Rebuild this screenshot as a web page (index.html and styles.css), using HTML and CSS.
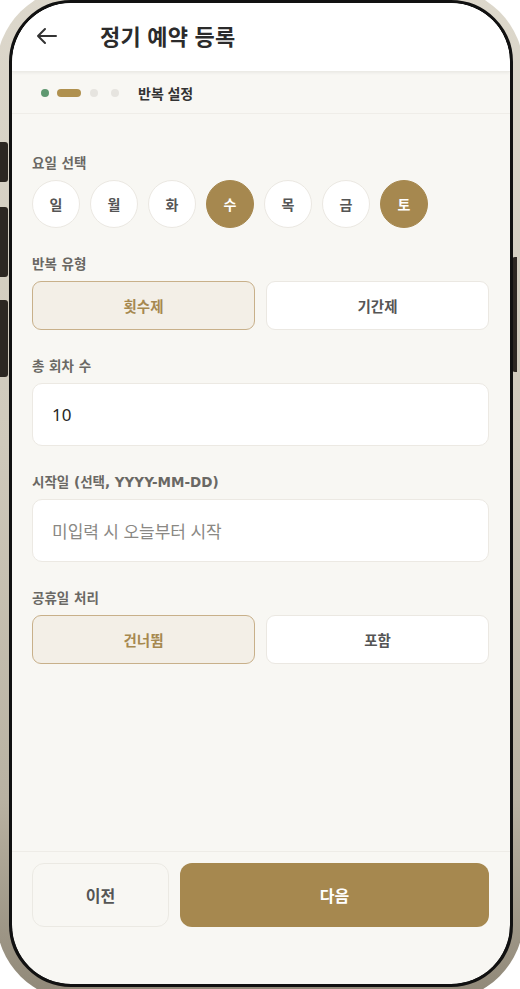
FILE: index.html
```html
<!DOCTYPE html>
<html lang="ko">
<head>
<meta charset="utf-8">
<title>정기 예약 등록</title>
<link rel="stylesheet" href="styles.css">
</head>
<body>
<div class="device">
  <span class="side-btn side-btn-1"></span>
  <span class="side-btn side-btn-2"></span>
  <span class="side-btn side-btn-3"></span>
  <span class="side-btn side-btn-r"></span>
  <div class="frame">
    <div class="screen">
      <header class="topbar">
        <svg class="back" width="22" height="18" viewBox="0 0 22 18" fill="none" stroke="#333" stroke-width="2" stroke-linecap="round" stroke-linejoin="round">
          <path d="M20 9H2M9 2L2 9l7 7"/>
        </svg>
        <h1 class="title">정기 예약 등록</h1>
      </header>
      <div class="progress">
        <span class="step done"></span>
        <span class="step current"></span>
        <span class="step"></span>
        <span class="step"></span>
        <span class="step-label">반복 설정</span>
      </div>
      <main class="content">
        <section class="field">
          <div class="label">요일 선택</div>
          <div class="days">
            <span class="day">일</span>
            <span class="day">월</span>
            <span class="day">화</span>
            <span class="day on">수</span>
            <span class="day">목</span>
            <span class="day">금</span>
            <span class="day on">토</span>
          </div>
        </section>
        <section class="field">
          <div class="label">반복 유형</div>
          <div class="toggle">
            <span class="opt on">횟수제</span>
            <span class="opt">기간제</span>
          </div>
        </section>
        <section class="field">
          <div class="label">총 회차 수</div>
          <div class="input">10</div>
        </section>
        <section class="field">
          <div class="label">시작일 (선택, YYYY-MM-DD)</div>
          <div class="input placeholder">미입력 시 오늘부터 시작</div>
        </section>
        <section class="field">
          <div class="label">공휴일 처리</div>
          <div class="toggle">
            <span class="opt on">건너뜀</span>
            <span class="opt">포함</span>
          </div>
        </section>
      </main>
      <footer class="footer">
        <span class="btn prev">이전</span>
        <span class="btn next">다음</span>
      </footer>
    </div>
  </div>
</div>
</body>
</html>
```
FILE: styles.css
```css
* { box-sizing: border-box; }
html, body {
  margin: 0;
  padding: 0;
  width: 520px;
  height: 989px;
  overflow: hidden;
  background: #ffffff;
  font-family: "Noto Sans", "Noto Sans CJK KR", sans-serif;
}
.device {
  position: relative;
  width: 528px;
  height: 1014px;
  margin: -13px 0 0 -4px;
  padding: 13px 11px 14px 13px;
  border-radius: 84px;
  background: linear-gradient(180deg, #ddd8cc 0%, #cfc9bb 45%, #b9b2a2 80%, #8f8777 100%);
}
.side-btn {
  position: absolute;
  left: 0;
  width: 12px;
  background: #2c2722;
  border-radius: 0 3px 3px 0;
}
.side-btn-1 { top: 155px; height: 40px; }
.side-btn-2 { top: 220px; height: 70px; }
.side-btn-3 { top: 313px; height: 77px; }
.side-btn-r { left: auto; right: 7px; top: 270px; height: 115px; width: 5px; border-radius: 3px 0 0 3px; }
.frame {
  position: relative;
  height: 100%;
  border: 3px solid #111;
  border-radius: 62px;
  background: #111;
  overflow: hidden;
}
.screen {
  height: 100%;
  border-radius: 59px;
  overflow: hidden;
  background: #f8f7f3;
  display: flex;
  flex-direction: column;
}
.topbar {
  height: 69px;
  flex: none;
  background: #ffffff;
  display: flex;
  align-items: center;
  padding: 0 0 0 24px;
  box-shadow: 0 1px 3px rgba(0,0,0,0.06);
  border-bottom: 1px solid #ecebe6;
  position: relative;
  z-index: 1;
}
.back { margin-top: -2px; }
.title {
  margin: -4px 0 0 42px;
  font-family: "Noto Sans CJK KR", sans-serif;
  font-size: 22px;
  font-weight: 700;
  color: #2b2b2b;
  letter-spacing: 0.2px;
  line-height: 1;
}
.progress {
  height: 42px;
  flex: none;
  display: flex;
  align-items: center;
  padding: 0 0 0 29px;
  border-bottom: 1px solid #efede8;
}
.step {
  width: 8px;
  height: 8px;
  border-radius: 4px;
  background: #e6e4df;
  margin-right: 13px;
}
.step.done { background: #5f9870; margin-right: 8px; }
.step.current { width: 24px; background: #b0914f; margin-right: 9px; }
.step-label {
  margin-left: 6px;
  font-size: 14px;
  font-weight: 700;
  color: #333;
}
.content {
  flex: 1;
  padding: 40px 21px 0 20px;
  display: flex;
  flex-direction: column;
  gap: 27px;
}
.label {
  font-family: "DejaVu Sans", "Noto Sans CJK KR", sans-serif;
  font-size: 13.5px;
  font-weight: 700;
  color: #6a6864;
  line-height: 18px;
  margin-bottom: 8px;
}
.days {
  display: flex;
  gap: 10px;
}
.day {
  width: 48px;
  height: 48px;
  border-radius: 50%;
  background: #fff;
  border: 1px solid #ebe8e2;
  display: flex;
  align-items: center;
  justify-content: center;
  font-size: 14px;
  font-weight: 700;
  color: #555;
}
.day.on {
  background: #a6884f;
  border-color: #a6884f;
  color: #fff;
}
.toggle {
  display: flex;
  gap: 11px;
}
.opt {
  flex: 1;
  height: 49px;
  border-radius: 9px;
  background: #fff;
  border: 1px solid #ebe8e2;
  display: flex;
  align-items: center;
  justify-content: center;
  font-size: 14.5px;
  font-weight: 700;
  color: #555;
}
.opt.on {
  background: #f3efe7;
  border: 1.5px solid #c8b08a;
  color: #a6884f;
}
.input {
  height: 63px;
  border-radius: 10px;
  background: #fff;
  border: 1px solid #ece9e3;
  display: flex;
  align-items: center;
  padding-left: 19px;
  font-size: 17px;
  color: #262626;
}
.input.placeholder { color: #8a8884; }
.footer {
  flex: none;
  border-top: 1px solid #eeece7;
  padding: 11px 21px 57px 20px;
  display: flex;
  gap: 11px;
}
.btn {
  height: 64px;
  border-radius: 12px;
  display: flex;
  align-items: center;
  justify-content: center;
  font-size: 16px;
  font-weight: 700;
}
.prev {
  width: 137px;
  flex: none;
  background: #f8f7f3;
  border: 1px solid #ebe9e3;
  color: #555;
}
.next {
  flex: 1;
  background: #a6884f;
  color: #fff;
}
```
